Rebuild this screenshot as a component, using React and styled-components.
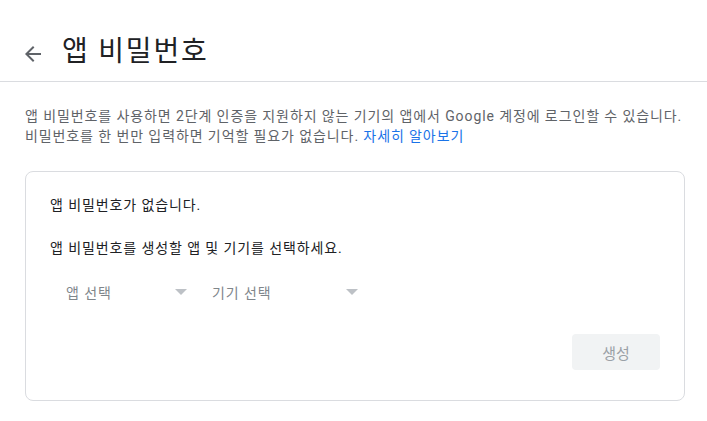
import React from "react";
import styled, { createGlobalStyle } from "styled-components";

const Global = createGlobalStyle`
  html, body { margin: 0; padding: 0; background: #fff; }
  body { font-family: Roboto, "Noto Sans CJK KR", "Noto Sans", sans-serif; -webkit-font-smoothing: antialiased; }
  * { box-sizing: border-box; }
`;

const Page = styled.div`
  width: 707px;
  min-height: 421px;
  background: #fff;
`;

const Header = styled.header`
  height: 82px;
  border-bottom: 1px solid #dadce0;
  display: flex;
  align-items: center;
  padding: 22px 0 0 21px;
  gap: 17px;
`;

const BackButton = styled.button`
  width: 24px;
  height: 24px;
  padding: 0;
  border: none;
  background: none;
  display: flex;
  align-items: center;
  justify-content: center;
  color: #5f6368;
  margin-top: 4px;
  cursor: pointer;
`;

const Title = styled.h1`
  margin: 0;
  font-size: 28px;
  font-weight: 400;
  color: #202124;
  line-height: 36px;
  letter-spacing: 1.8px;
`;

const Description = styled.p`
  margin: 24px 0 0 25px;
  width: 670px;
  font-size: 14px;
  line-height: 20px;
  color: #5f6368;
  letter-spacing: 0.9px;
  white-space: nowrap;
`;

const Link = styled.a`
  color: #1a73e8;
  text-decoration: none;
`;

const Card = styled.section`
  margin: 25px 0 0 25px;
  width: 660px;
  height: 230px;
  border: 1px solid #dadce0;
  border-radius: 8px;
  padding: 23px 24px 30px 24px;
  display: flex;
  flex-direction: column;
`;

const Text = styled.p`
  margin: ${(p) => p.$top || 0}px 0 0 0;
  font-size: 14px;
  line-height: 20px;
  color: #202124;
  letter-spacing: 0.9px;
`;

const SelectRow = styled.div`
  display: flex;
  margin-top: 16px;
  height: 36px;
`;

const Select = styled.div`
  width: ${(p) => p.$width}px;
  height: 36px;
  display: flex;
  align-items: center;
  justify-content: space-between;
  padding: 0 9px 0 16px;
  font-size: 14px;
  letter-spacing: 0.9px;
  color: #80868b;
  cursor: pointer;
`;

const Caret = styled.span`
  width: 0;
  height: 0;
  border-left: 6px solid transparent;
  border-right: 6px solid transparent;
  border-top: 6px solid #bdc1c6;
  margin-top: -1px;
`;

const Actions = styled.div`
  display: flex;
  justify-content: flex-end;
  margin-top: 24px;
`;

const Generate = styled.button`
  width: 88px;
  height: 36px;
  border: none;
  border-radius: 4px;
  background: #f1f3f4;
  color: #9aa0a6;
  font-family: inherit;
  font-size: 15px;
  padding: 0;
`;

export default function App() {
  return (
    <Page>
      <Global />
      <Header>
        <BackButton aria-label="뒤로">
          <svg width="24" height="24" viewBox="0 0 24 24" fill="currentColor">
            <path d="M20 11H7.83l5.59-5.59L12 4l-8 8 8 8 1.41-1.41L7.83 13H20v-2z" />
          </svg>
        </BackButton>
        <Title>앱 비밀번호</Title>
      </Header>
      <Description>
        앱 비밀번호를 사용하면 2단계 인증을 지원하지 않는 기기의 앱에서 Google 계정에 로그인할 수 있습니다.
        <br />
        비밀번호를 한 번만 입력하면 기억할 필요가 없습니다. <Link href="#">자세히 알아보기</Link>
      </Description>
      <Card>
        <Text>앱 비밀번호가 없습니다.</Text>
        <Text $top={23}>앱 비밀번호를 생성할 앱 및 기기를 선택하세요.</Text>
        <SelectRow>
          <Select $width={146}>
            <span>앱 선택</span>
            <Caret />
          </Select>
          <Select $width={171}>
            <span>기기 선택</span>
            <Caret />
          </Select>
        </SelectRow>
        <Actions>
          <Generate disabled>생성</Generate>
        </Actions>
      </Card>
    </Page>
  );
}
